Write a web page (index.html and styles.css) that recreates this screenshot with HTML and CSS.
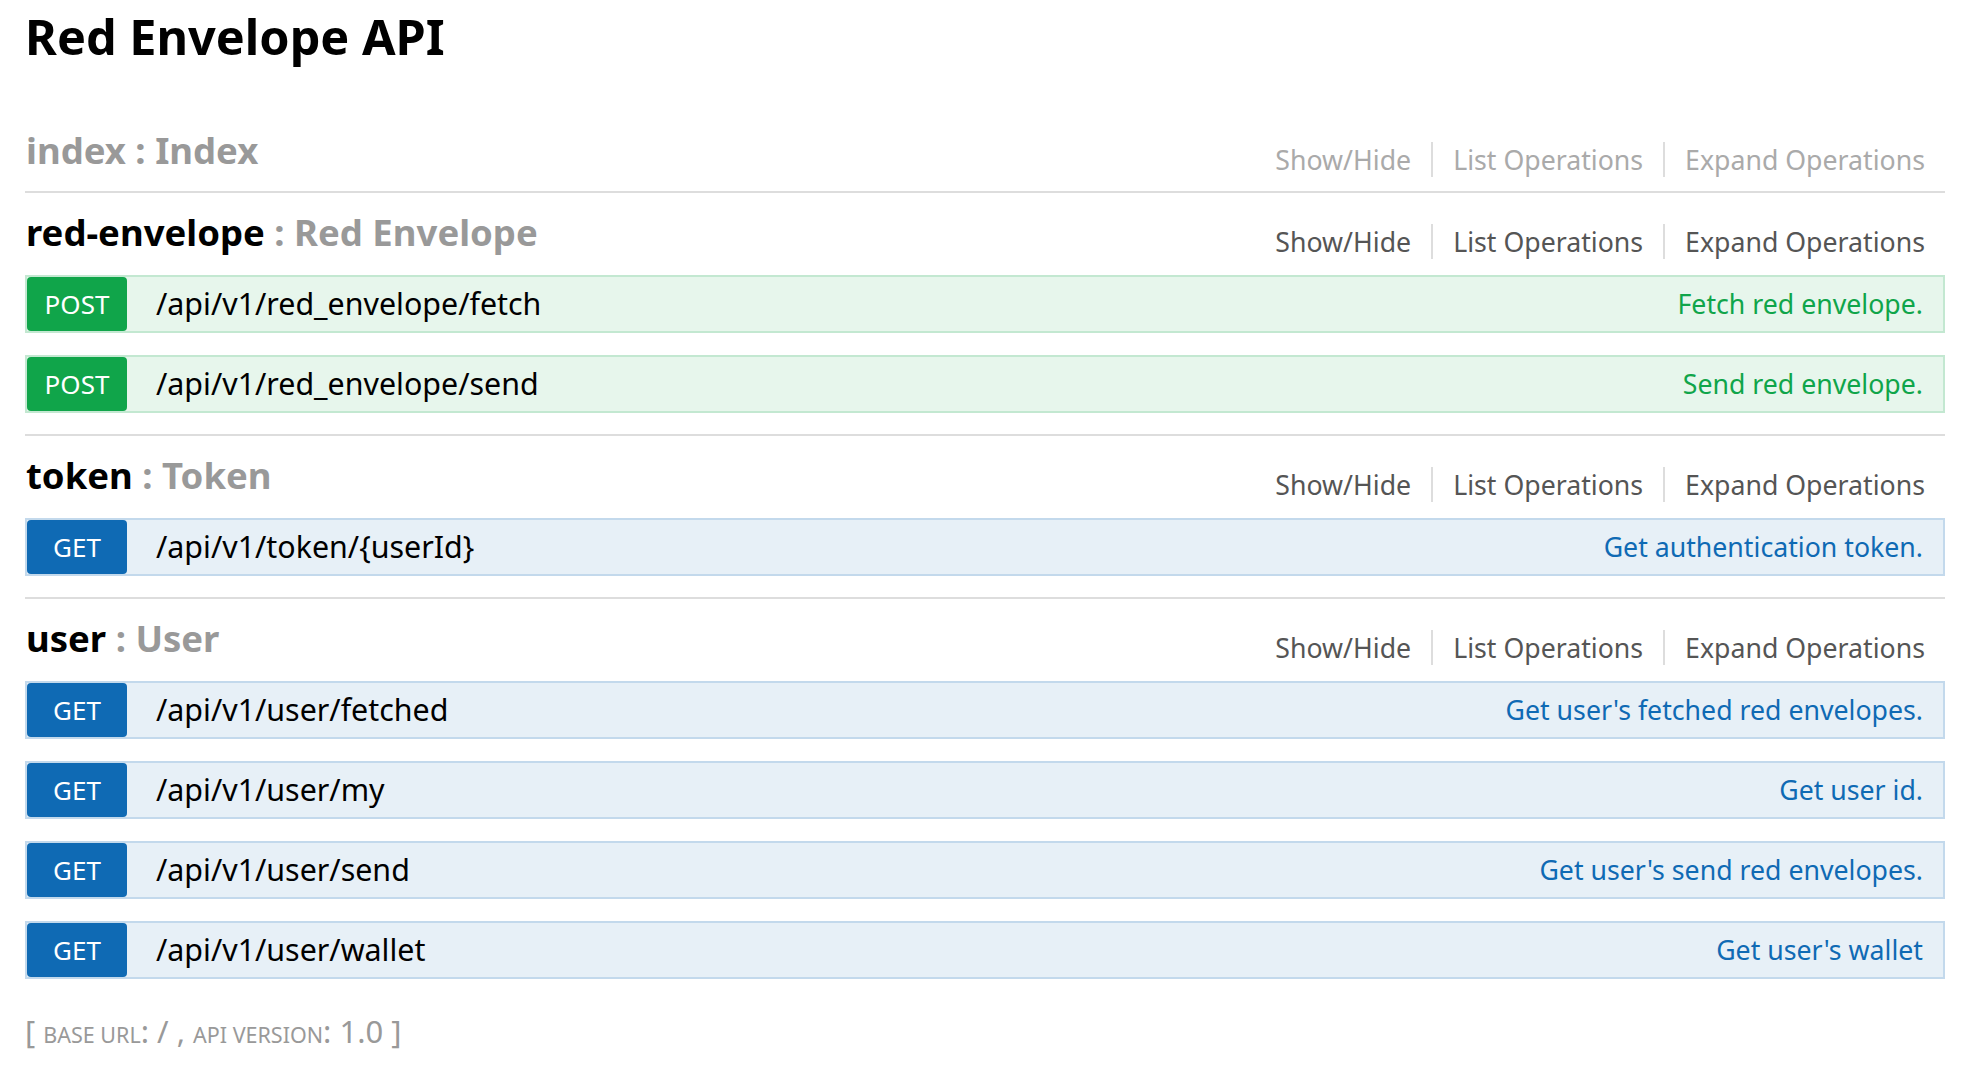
FILE: index.html
```html
<!DOCTYPE html>
<html>
<head>
<meta charset="utf-8">
<title>Red Envelope API</title>
<link rel="stylesheet" href="styles.css">
</head>
<body>
<div class="wrap">
  <div class="info">
    <div class="info-title">Red Envelope API</div>
  </div>
  <ul class="resources">
    <li class="resource">
      <div class="res-heading">
        <h2 class="res-title"><a class="res-name">index</a> : <span>Index</span></h2>
        <ul class="options">
          <li>Show/Hide</li>
          <li>List Operations</li>
          <li class="last">Expand Operations</li>
        </ul>
      </div>
    </li>
    <li class="resource active">
      <div class="res-heading">
        <h2 class="res-title"><a class="res-name">red-envelope</a> : <span>Red Envelope</span></h2>
        <ul class="options">
          <li>Show/Hide</li>
          <li>List Operations</li>
          <li class="last">Expand Operations</li>
        </ul>
      </div>
      <ul class="ops">
        <li class="op post"><span class="method">POST</span><span class="path">/api/v1/red_envelope/fetch</span><span class="desc">Fetch red envelope.</span></li>
        <li class="op post"><span class="method">POST</span><span class="path">/api/v1/red_envelope/send</span><span class="desc">Send red envelope.</span></li>
      </ul>
    </li>
    <li class="resource active">
      <div class="res-heading">
        <h2 class="res-title"><a class="res-name">token</a> : <span>Token</span></h2>
        <ul class="options">
          <li>Show/Hide</li>
          <li>List Operations</li>
          <li class="last">Expand Operations</li>
        </ul>
      </div>
      <ul class="ops">
        <li class="op get"><span class="method">GET</span><span class="path">/api/v1/token/{userId}</span><span class="desc">Get authentication token.</span></li>
      </ul>
    </li>
    <li class="resource active">
      <div class="res-heading">
        <h2 class="res-title"><a class="res-name">user</a> : <span>User</span></h2>
        <ul class="options">
          <li>Show/Hide</li>
          <li>List Operations</li>
          <li class="last">Expand Operations</li>
        </ul>
      </div>
      <ul class="ops">
        <li class="op get"><span class="method">GET</span><span class="path">/api/v1/user/fetched</span><span class="desc">Get user's fetched red envelopes.</span></li>
        <li class="op get"><span class="method">GET</span><span class="path">/api/v1/user/my</span><span class="desc">Get user id.</span></li>
        <li class="op get"><span class="method">GET</span><span class="path">/api/v1/user/send</span><span class="desc">Get user's send red envelopes.</span></li>
        <li class="op get"><span class="method">GET</span><span class="path">/api/v1/user/wallet</span><span class="desc">Get user's wallet</span></li>
      </ul>
    </li>
  </ul>
  <div class="footer">[ <span class="sc">base url</span>: / , <span class="sc">api version</span>: 1.0 ]</div>
</div>
</body>
</html>
```

FILE: styles.css
```css
html, body {
  margin: 0;
  padding: 0;
  background: #ffffff;
}

body {
  font-family: "Noto Sans", "DejaVu Sans", sans-serif;
  color: #000000;
}

.wrap {
  max-width: 1920px;
  margin: 0 auto;
  padding: 0 25px;
  line-height: 1;
}

.info {
  padding-top: 12px;
  margin-bottom: 51px;
}

.info-title {
  font-size: 48.6px;
  line-height: 48px;
  font-weight: bold;
  color: #000;
}

.resources {
  list-style: none;
  margin: 0;
  padding: 0;
}

.resource {
  padding: 21px 0 21px 0;
  border-bottom: 2px solid #dddddd;
}

.resource:last-child {
  border-bottom: none;
}

.res-heading {
  display: flex;
  justify-content: space-between;
  align-items: flex-start;
  height: 38px;
}

.res-title {
  margin: 0 0 0 1px;
  font-size: 36.5px;
  line-height: 36px;
  font-weight: bold;
  color: #999999;
  white-space: nowrap;
}

.res-name {
  color: #999999;
}

.resource.active .res-name {
  color: #000000;
}

.options {
  list-style: none;
  display: flex;
  margin: 10px 20px 0 0;
  padding: 0;
}

.options li {
  padding: 4px 20px;
  font-size: 26.7px;
  line-height: 27px;
  color: #aaaaaa;
  border-right: 2px solid #dddddd;
  white-space: nowrap;
}

.options li.last {
  padding-right: 0;
  border-right: none;
}

.resource.active .options li {
  color: #555555;
}

.ops {
  list-style: none;
  margin: 23px 0 0 0;
  padding: 0;
  display: flex;
  flex-direction: column;
  gap: 22px;
}

.op {
  display: flex;
  align-items: stretch;
  height: 54px;
  border: 2px solid;
}

.op.post {
  background: #e7f6ec;
  border-color: #c3e8d1;
}

.op.get {
  background: #e7f0f7;
  border-color: #c3d9ec;
}

.method {
  flex: 0 0 100px;
  width: 100px;
  text-align: center;
  color: #ffffff;
  font-size: 26px;
  line-height: 54px;
  border-radius: 4px;
}

.post .method {
  background: #10a54a;
}

.get .method {
  background: #0f6ab4;
}

.path {
  padding-left: 29px;
  font-size: 30.4px;
  line-height: 54px;
  color: #000;
  white-space: nowrap;
}

.desc {
  margin-left: auto;
  padding-right: 20px;
  font-size: 26.7px;
  line-height: 54px;
  white-space: nowrap;
}

.post .desc {
  color: #10a54a;
}

.get .desc {
  color: #0f6ab4;
}

.footer {
  margin-top: 16px;
  font-size: 31px;
  line-height: 31px;
  color: #999999;
}

.sc {
  text-transform: uppercase;
  font-size: 21.5px;
}
```
